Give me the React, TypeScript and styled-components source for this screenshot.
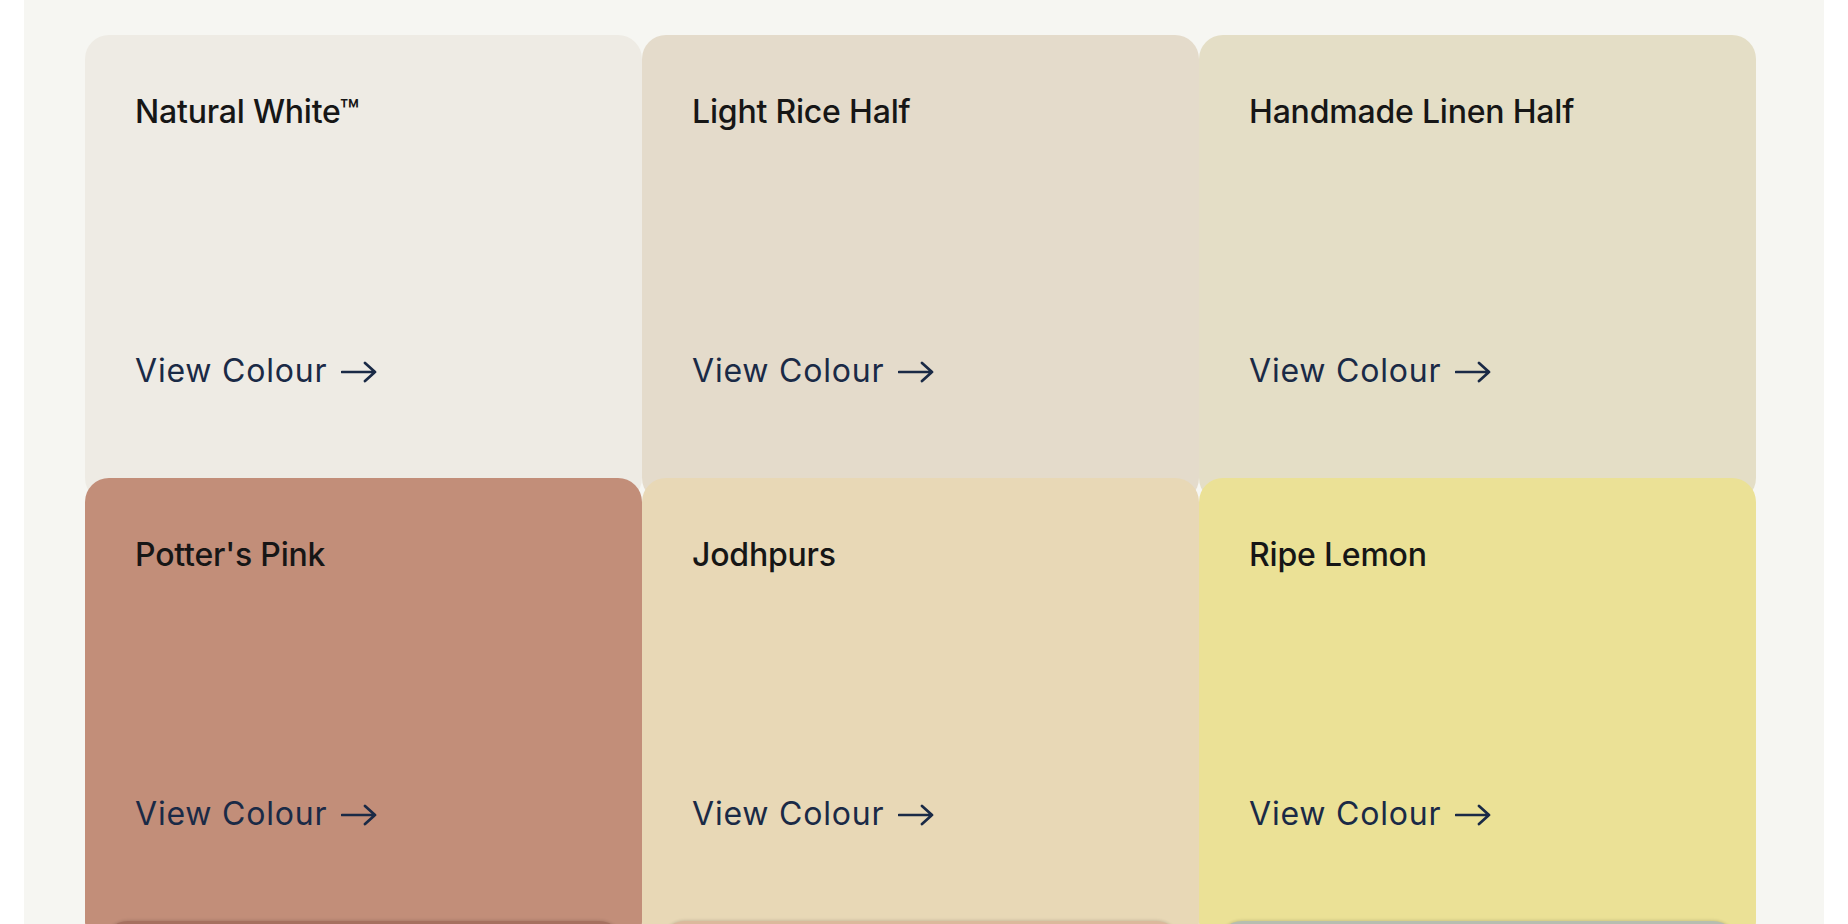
import React from "react";
import styled, { createGlobalStyle } from "styled-components";

const GlobalStyle = createGlobalStyle`
  * { box-sizing: border-box; }
  html, body {
    margin: 0;
    padding: 0;
    background: #ffffff;
    overflow: hidden;
  }
  body {
    font-family: Inter, "Noto Sans", "Liberation Sans", sans-serif;
  }
`;

const Page = styled.main`
  margin: 0 24px;
  height: 924px;
  overflow: hidden;
  background: #f6f6f2;
  padding: 35px 68px 0 61px;
`;

const Stack = styled.div`
  display: flex;
  flex-direction: column;
`;

const Row = styled.div`
  display: grid;
  grid-template-columns: repeat(3, 1fr);

  & + & {
    margin-top: -24px;
  }
`;

const Card = styled.a<{ $bg: string; $inset?: number }>`
  display: flex;
  flex-direction: column;
  align-items: flex-start;
  height: 467px;
  margin: 0 ${(p) => p.$inset ?? 0}px;
  padding: 58px 50px 0;
  border-radius: 24px;
  background: ${(p) => p.$bg};
  text-decoration: none;
  box-shadow: ${(p) => (p.$inset ? "0 -1px 3px rgba(0,0,0,0.12)" : "none")};
`;

const Title = styled.h3`
  margin: 0;
  font-size: 32px;
  line-height: 1.2;
  font-weight: 500;
  letter-spacing: -0.2px;
  color: #161616;
`;

const Link = styled.span`
  display: inline-flex;
  align-items: center;
  gap: 14px;
  margin-top: 221px;
  font-size: 32px;
  line-height: 1.2;
  font-weight: 400;
  letter-spacing: 0.8px;
  color: #1a2a46;
`;

const ArrowIcon = () => (
  <svg width="36" height="22" viewBox="0 0 36 22" fill="none" aria-hidden="true">
    <path
      d="M1 11H34M24 2L34 11L24 20"
      stroke="#1a2a46"
      strokeWidth="2.7"
      strokeLinecap="round"
      strokeLinejoin="round"
    />
  </svg>
);

type Swatch = { name: string; bg: string };

const rows: Swatch[][] = [
  [
    { name: "Natural White™", bg: "#eeebe4" },
    { name: "Light Rice Half", bg: "#e4dbcb" },
    { name: "Handmade Linen Half", bg: "#e4dec6" },
  ],
  [
    { name: "Potter's Pink", bg: "#c28e79" },
    { name: "Jodhpurs", bg: "#e8d8b6" },
    { name: "Ripe Lemon", bg: "#ebe196" },
  ],
  [
    { name: "Cinder Rose", bg: "#a5705f" },
    { name: "Setting Plaster", bg: "#dbb99c" },
    { name: "Pigeon", bg: "#b6beb0" },
  ],
];

export default function App() {
  return (
    <>
      <GlobalStyle />
      <Page>
        <Stack>
          {rows.map((row, i) => (
            <Row key={i}>
              {row.map((s) => (
                <Card key={s.name} href="#" $bg={s.bg} $inset={i === 2 ? 19 : 0}>
                  <Title>{s.name}</Title>
                  <Link>
                    View Colour
                    <ArrowIcon />
                  </Link>
                </Card>
              ))}
            </Row>
          ))}
        </Stack>
      </Page>
    </>
  );
}
